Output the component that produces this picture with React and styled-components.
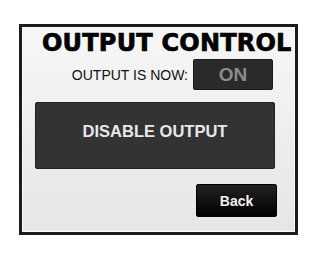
import React, { useState } from "react";
import styled, { createGlobalStyle } from "styled-components";

const GlobalStyle = createGlobalStyle`
  html, body {
    margin: 0;
    padding: 0;
    background: #fff;
  }
  body {
    font-family: "Liberation Sans", Arial, sans-serif;
  }
`;

export const Page = styled.div`
  width: 329px;
  height: 260px;
  padding: 24px 0 0 19px;
  box-sizing: border-box;
`;

export const Panel = styled.div`
  width: 279px;
  height: 211px;
  box-sizing: border-box;
  border: 3px solid #1c1c1c;
  background: linear-gradient(180deg, #f7f7f7 0%, #ececec 60%, #e6e6e6 100%);
  box-shadow: inset 0 0 0 1px #fafafa;
  display: flex;
  flex-direction: column;
  padding: 3px 0 0 0;
`;

export const Title = styled.h1`
  margin: 0;
  padding-left: 20px;
  font-family: "DejaVu Sans", sans-serif;
  font-weight: bold;
  font-size: 24px;
  letter-spacing: 0.2px;
  -webkit-text-stroke: 0.7px #000;
  line-height: 26px;
  color: #000;
  white-space: nowrap;
`;

export const StatusRow = styled.div`
  display: flex;
  align-items: center;
  justify-content: flex-end;
  gap: 5px;
  padding-right: 22px;
  margin-top: 3px;
`;

export const StatusLabel = styled.span`
  font-size: 14px;
  color: #111;
`;

export const StatusBox = styled.div`
  width: 80px;
  height: 31px;
  box-sizing: border-box;
  background: #2a2a2a;
  border: 1px solid #1a1a1a;
  border-radius: 2px;
  display: flex;
  align-items: center;
  justify-content: center;
  font-weight: bold;
  font-size: 19px;
  color: ${(p) => (p.on ? "#8c8c8c" : "#5a5a5a")};
`;

export const BigButton = styled.button`
  margin: 12px 0 0 13px;
  width: 240px;
  height: 67px;
  background: #333;
  border: 1px solid #202020;
  border-radius: 2px;
  color: #e8e8e8;
  font-family: "Liberation Sans", Arial, sans-serif;
  font-weight: bold;
  font-size: 16.5px;
  padding: 0 0 8px 0;
  cursor: pointer;
`;

export const Footer = styled.div`
  display: flex;
  justify-content: flex-end;
  padding-right: 18px;
  margin-top: 15px;
`;

export const BackButton = styled.button`
  width: 81px;
  height: 33px;
  background: linear-gradient(180deg, #222 0%, #000 100%);
  border: 1px solid #000;
  border-radius: 2px;
  color: #f2f2f2;
  font-family: "Liberation Sans", Arial, sans-serif;
  font-weight: bold;
  font-size: 14px;
  cursor: pointer;
`;

function App() {
  const [on, setOn] = useState(true);

  return (
    <>
      <GlobalStyle />
      <Page>
        <Panel>
          <Title>OUTPUT CONTROL</Title>
          <StatusRow>
            <StatusLabel>OUTPUT IS NOW:</StatusLabel>
            <StatusBox on={on}>{on ? "ON" : "OFF"}</StatusBox>
          </StatusRow>
          <BigButton onClick={() => setOn(!on)}>
            {on ? "DISABLE OUTPUT" : "ENABLE OUTPUT"}
          </BigButton>
          <Footer>
            <BackButton>Back</BackButton>
          </Footer>
        </Panel>
      </Page>
    </>
  );
}

export default App;
